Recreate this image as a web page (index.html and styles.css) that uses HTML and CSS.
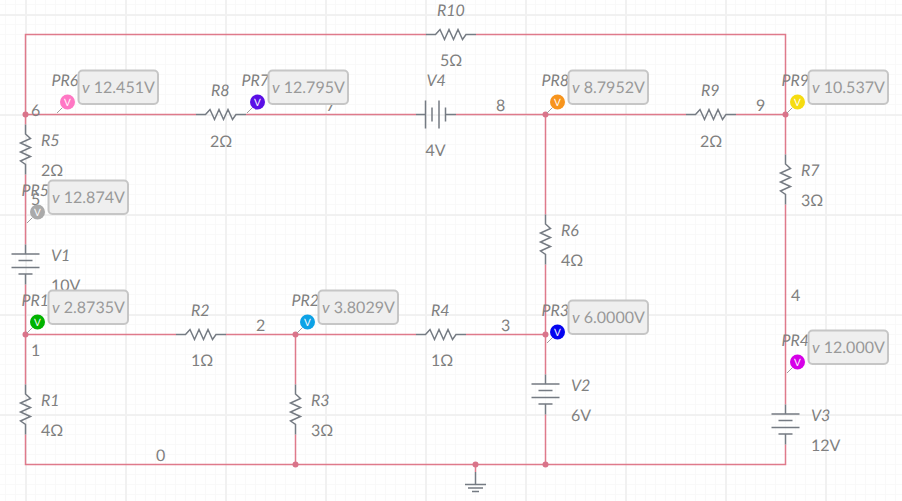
FILE: index.html
```html
<!DOCTYPE html>
<html lang="en">
<head>
    <meta charset="UTF-8">
    <meta name="viewport" content="width=device-width, initial-scale=1.0">
    <link rel="stylesheet" href="styles.css">
    <title>Circuit schematic</title>
</head>
<body>
    <div class="canvas">
        <svg class="schematic" width="902" height="501" viewBox="0 0 902 501">
            <defs>
                <path id="resistor" d="M0 0H9.500L14-5 18.500 5 23-5 27.500 5 32-5 36.500 5 40 0H50"/>
                <path id="source" d="M0 0V9.500M-14 9.500H14M-7 16H7M-14 23H14M-7 29.500H7M0 29.500V40"/>
            </defs>

            <!-- Wires, broken where a part sits -->
            <path class="wire" d="M25.500 124.500V34.500H426M476 34.500H785.500V154.500M785.500 204.500V404.500M785.500 444.500V464.500H25.500V434.500M25.500 384.500V284.500M25.500 244.500V174.500M25.500 114.500H196M246 114.500H416M456 114.500H686M736 114.500H785.500M25.500 334.500H176M226 334.500H416M466 334.500H545.500M295.500 334.500V384.500M295.500 434.500V464.500M545.500 114.500V214.500M545.500 264.500V374.500M545.500 414.500V464.500M475.500 464.500V472"/>

            <!-- Resistors -->
            <use class="part" href="#resistor" transform="translate(426 34.500)"/>
            <use class="part" href="#resistor" transform="translate(196 114.500)"/>
            <use class="part" href="#resistor" transform="translate(686 114.500)"/>
            <use class="part" href="#resistor" transform="translate(176 334.500)"/>
            <use class="part" href="#resistor" transform="translate(416 334.500)"/>
            <use class="part" href="#resistor" transform="translate(25.500 124.500) rotate(90)"/>
            <use class="part" href="#resistor" transform="translate(25.500 384.500) rotate(90)"/>
            <use class="part" href="#resistor" transform="translate(295.500 384.500) rotate(90)"/>
            <use class="part" href="#resistor" transform="translate(545.500 214.500) rotate(90)"/>
            <use class="part" href="#resistor" transform="translate(785.500 154.500) rotate(90)"/>

            <!-- Voltage sources -->
            <use class="part" href="#source" transform="translate(25.500 244.500)"/>
            <use class="part" href="#source" transform="translate(545.500 374.500)"/>
            <use class="part" href="#source" transform="translate(785.500 404.500)"/>
            <use class="part" href="#source" transform="translate(416 114.500) rotate(-90)"/>

            <!-- Ground -->
            <path class="part" d="M475.500 472V484M465 484.500H486M468 488H483M472 491.500H479"/>

            <!-- Junctions -->
            <g class="junctions">
                <circle cx="25.500" cy="114.500" r="3"/>
                <circle cx="25.500" cy="334.500" r="3"/>
                <circle cx="295.500" cy="334.500" r="3"/>
                <circle cx="295.500" cy="464.500" r="3"/>
                <circle cx="475.500" cy="464.500" r="3"/>
                <circle cx="545.500" cy="464.500" r="3"/>
                <circle cx="545.500" cy="334.500" r="3"/>
                <circle cx="545.500" cy="114.500" r="3"/>
                <circle cx="785.500" cy="114.500" r="3"/>
            </g>

            <!-- Component and net labels -->
            <g class="labels">
                <text class="name" x="437" y="15.500">R10</text>
                <text x="440" y="66">5Ω</text>
                <text class="name" x="211" y="96">R8</text>
                <text x="210" y="147">2Ω</text>
                <text class="name" x="41" y="146">R5</text>
                <text x="41" y="176">2Ω</text>
                <text class="name" x="426.500" y="86">V4</text>
                <text x="425.500" y="156">4V</text>
                <text class="name" x="561" y="236">R6</text>
                <text x="561" y="266">4Ω</text>
                <text class="name" x="701" y="96">R9</text>
                <text x="700" y="147">2Ω</text>
                <text class="name" x="801" y="176">R7</text>
                <text x="801" y="206">3Ω</text>
                <text class="name" x="51" y="261">V1</text>
                <text x="51" y="291">10V</text>
                <text class="name" x="191" y="316">R2</text>
                <text x="191" y="366">1Ω</text>
                <text class="name" x="431" y="316">R4</text>
                <text x="431" y="366">1Ω</text>
                <text class="name" x="41" y="406">R1</text>
                <text x="41" y="436">4Ω</text>
                <text class="name" x="311" y="406">R3</text>
                <text x="311" y="436">3Ω</text>
                <text class="name" x="571" y="391">V2</text>
                <text x="571" y="421">6V</text>
                <text class="name" x="811" y="421">V3</text>
                <text x="811" y="451">12V</text>
                <text x="31" y="116">6</text>
                <text x="31" y="205">5</text>
                <text x="326" y="111">7</text>
                <text x="496" y="111">8</text>
                <text x="756" y="111">9</text>
                <text x="791" y="301">4</text>
                <text x="31" y="356">1</text>
                <text x="256" y="331">2</text>
                <text x="501" y="331">3</text>
                <text x="156" y="461">0</text>
            </g>

            <!-- Probes -->
            <g class="probe" transform="translate(67.500 102)">
                <text class="name" x="-16" y="-16">PR6</text>
                <line x1="-10.500" y1="11" x2="-5.500" y2="6"/>
                <circle class="dot-pink" r="7.500"/>
                <text class="dot-letter" y="3.500">V</text>
                <rect x="11" y="-31.500" width="79.500" height="33.500" rx="4"/>
                <text class="reading" x="14.500" y="-9.500"><tspan class="unit">v</tspan> 12.451V</text>
            </g>
            <g class="probe" transform="translate(257.500 102)">
                <text class="name" x="-16" y="-16">PR7</text>
                <line x1="-10.500" y1="11" x2="-5.500" y2="6"/>
                <circle class="dot-violet" r="7.500"/>
                <text class="dot-letter" y="3.500">V</text>
                <rect x="11" y="-31.500" width="79.500" height="33.500" rx="4"/>
                <text class="reading" x="14.500" y="-9.500"><tspan class="unit">v</tspan> 12.795V</text>
            </g>
            <g class="probe" transform="translate(557.500 102)">
                <text class="name" x="-16" y="-16">PR8</text>
                <line x1="-10.500" y1="11" x2="-5.500" y2="6"/>
                <circle class="dot-orange" r="7.500"/>
                <text class="dot-letter" y="3.500">V</text>
                <rect x="11" y="-31.500" width="79.500" height="33.500" rx="4"/>
                <text class="reading" x="14.500" y="-9.500"><tspan class="unit">v</tspan> 8.7952V</text>
            </g>
            <g class="probe" transform="translate(797.500 102)">
                <text class="name" x="-16" y="-16">PR9</text>
                <line x1="-10.500" y1="11" x2="-5.500" y2="6"/>
                <circle class="dot-yellow" r="7.500"/>
                <text class="dot-letter" y="3.500">V</text>
                <rect x="11" y="-31.500" width="79.500" height="33.500" rx="4"/>
                <text class="reading" x="14.500" y="-9.500"><tspan class="unit">v</tspan> 10.537V</text>
            </g>
            <g class="probe" transform="translate(37.500 212)">
                <text class="name" x="-16" y="-16">PR5</text>
                <line x1="-10.500" y1="11" x2="-5.500" y2="6"/>
                <circle class="dot-grey" r="7.500"/>
                <text class="dot-letter" y="3.500">V</text>
                <rect x="11" y="-31.500" width="79.500" height="33.500" rx="4"/>
                <text class="reading" x="14.500" y="-9.500"><tspan class="unit">v</tspan> 12.874V</text>
            </g>
            <g class="probe" transform="translate(37.500 322)">
                <text class="name" x="-16" y="-16">PR1</text>
                <line x1="-10.500" y1="11" x2="-5.500" y2="6"/>
                <circle class="dot-green" r="7.500"/>
                <text class="dot-letter" y="3.500">V</text>
                <rect x="11" y="-31.500" width="79.500" height="33.500" rx="4"/>
                <text class="reading" x="14.500" y="-9.500"><tspan class="unit">v</tspan> 2.8735V</text>
            </g>
            <g class="probe" transform="translate(307.500 322)">
                <text class="name" x="-16" y="-16">PR2</text>
                <line x1="-10.500" y1="11" x2="-5.500" y2="6"/>
                <circle class="dot-sky" r="7.500"/>
                <text class="dot-letter" y="3.500">V</text>
                <rect x="11" y="-31.500" width="79.500" height="33.500" rx="4"/>
                <text class="reading" x="14.500" y="-9.500"><tspan class="unit">v</tspan> 3.8029V</text>
            </g>
            <g class="probe" transform="translate(557.500 332)">
                <text class="name" x="-16" y="-16">PR3</text>
                <line x1="-10.500" y1="11" x2="-5.500" y2="6"/>
                <circle class="dot-blue" r="7.500"/>
                <text class="dot-letter" y="3.500">V</text>
                <rect x="11" y="-31.500" width="79.500" height="33.500" rx="4"/>
                <text class="reading" x="14.500" y="-9.500"><tspan class="unit">v</tspan> 6.0000V</text>
            </g>
            <g class="probe" transform="translate(797.500 362)">
                <text class="name" x="-16" y="-16">PR4</text>
                <line x1="-10.500" y1="11" x2="-5.500" y2="6"/>
                <circle class="dot-magenta" r="7.500"/>
                <text class="dot-letter" y="3.500">V</text>
                <rect x="11" y="-31.500" width="79.500" height="33.500" rx="4"/>
                <text class="reading" x="14.500" y="-9.500"><tspan class="unit">v</tspan> 12.000V</text>
            </g>
        </svg>
    </div>
</body>
</html>
```

FILE: styles.css
```css
html, body {
    margin: 0;
    padding: 0;
    overflow: hidden;
}

/* Major grid every 100px, minor grid every 10px */
.canvas {
    width: 902px;
    height: 501px;
    background-color: #fff;
    background-image:
        linear-gradient(to right, #f1f1f1 2px, transparent 2px),
        linear-gradient(to bottom, #f1f1f1 2px, transparent 2px),
        linear-gradient(to right, #f9f9f9 1px, transparent 1px),
        linear-gradient(to bottom, #f9f9f9 1px, transparent 1px);
    background-size: 100px 100px, 100px 100px, 10px 10px, 10px 10px;
    background-position: 25px 0, 0 14px, 5px 0, 0 4px;
}

.schematic {
    display: block;
}

.wire {
    fill: none;
    stroke: #df7a8b;
    stroke-width: 1.5;
}

.part {
    fill: none;
    stroke: #757b83;
    stroke-width: 1.5;
}

.junctions circle {
    fill: #d9748a;
}

text {
    font-family: "Lato", sans-serif;
    font-size: 16px;
    fill: #808080;
    text-rendering: geometricPrecision;
}

.name {
    font-style: italic;
}

.probe line {
    stroke: #a0a0a0;
    stroke-width: 1;
}

.probe rect {
    fill: #efefef;
    stroke: #c6c6c6;
    stroke-width: 2;
}

.dot-letter {
    font-size: 10px;
    fill: #fff;
    text-anchor: middle;
}

.reading {
    font-size: 16px;
    fill: #999;
}

.unit {
    font-style: italic;
}

.dot-pink { fill: #ff77c4; }
.dot-violet { fill: #5a0fe6; }
.dot-orange { fill: #f7941d; }
.dot-yellow { fill: #f6dc10; }
.dot-grey { fill: #aaa; }
.dot-green { fill: #00b300; }
.dot-sky { fill: #0ca2e6; }
.dot-blue { fill: #0505f0; }
.dot-magenta { fill: #d600e8; }
```
